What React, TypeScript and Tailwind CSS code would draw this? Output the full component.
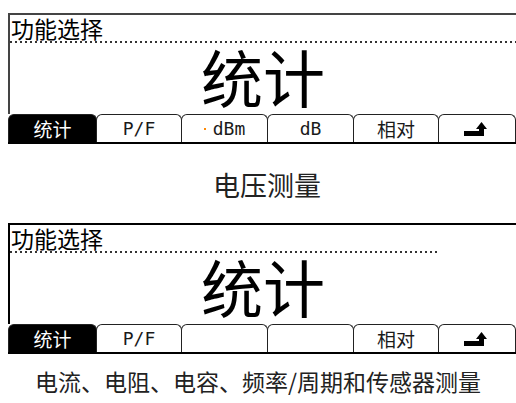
import clsx from "clsx";

type TabDef = { label?: string; w: string; kind?: "active" | "mono" | "cjk" | "dbm" | "back" };

const voltageTabs: TabDef[] = [
  { label: "统计", w: "w-[89px]", kind: "active" },
  { label: "P/F", w: "w-[86px]", kind: "mono" },
  { label: "dBm", w: "w-[87px]", kind: "dbm" },
  { label: "dB", w: "w-[87px]", kind: "mono" },
  { label: "相对", w: "w-[86px]", kind: "cjk" },
  { w: "flex-1", kind: "back" },
];

const otherTabs: TabDef[] = [
  { label: "统计", w: "w-[89px]", kind: "active" },
  { label: "P/F", w: "w-[86px]", kind: "mono" },
  { w: "w-[87px]" },
  { w: "w-[87px]" },
  { label: "相对", w: "w-[86px]", kind: "cjk" },
  { w: "flex-1", kind: "back" },
];

const BackIcon = () => (
  <svg width="28" height="16" viewBox="0 0 28 16">
    <rect x="1" y="10" width="20" height="5" fill="#000" />
    <rect x="16" y="6" width="5" height="9" fill="#000" />
    <polygon points="13,8 18.5,1 24,8" fill="#000" />
  </svg>
);

const Tab = ({ tab }: { tab: TabDef }) => {
  const active = tab.kind === "active";
  return (
    <div
      className={clsx(
        "-ml-px first:ml-0 h-[28px] flex items-center justify-center rounded-t-[6px] border-x border-t border-[#222]",
        tab.w,
        active ? "bg-black text-white" : "bg-white text-[#1a1a1a]"
      )}
    >
      {tab.kind === "back" && <BackIcon />}
      {(tab.kind === "active" || tab.kind === "cjk") && (
        <span className="text-[19px] leading-none font-['Noto_Sans_CJK_SC',sans-serif]">
          {tab.label}
        </span>
      )}
      {tab.kind === "mono" && (
        <span className="text-[18px] leading-none font-['DejaVu_Sans_Mono',monospace]">
          {tab.label}
        </span>
      )}
      {tab.kind === "dbm" && (
        <span className="flex items-center text-[18px] leading-none font-['DejaVu_Sans_Mono',monospace]">
          <span className="w-[2px] h-[2px] bg-orange-400 mr-[7px]" />
          {tab.label}
        </span>
      )}
    </div>
  );
};

const Screen = ({
  tabs,
  lineColor,
  dotWidth,
}: {
  tabs: TabDef[];
  lineColor: string;
  dotWidth: string;
}) => (
  <div className="ml-[8px]">
    <div className={clsx("border-t-2 border-l-2", lineColor)}>
      <div className="h-[26px] pl-[1px] flex items-center text-[23px] leading-none text-black font-['Noto_Sans_CJK_SC',sans-serif]">
        功能选择
      </div>
      <div
        className={clsx(
          "h-[2px] bg-[linear-gradient(to_right,#333_2px,transparent_2px)] bg-[length:5px_2px]",
          dotWidth
        )}
      />
      <div className="h-[71px] pb-[6px] flex items-center justify-center text-[62px] leading-[58px] text-black font-['Noto_Sans_CJK_SC',sans-serif]">
        统计
      </div>
    </div>
    <div className="flex items-end border-b-2 border-black">
      {tabs.map((t, i) => (
        <Tab key={i} tab={t} />
      ))}
    </div>
  </div>
);

export default function App() {
  return (
    <div className="w-[516px] h-[403px] bg-white overflow-hidden pt-[13px]">
      <Screen tabs={voltageTabs} lineColor="border-[#444]" dotWidth="w-full" />
      <div className="h-[79px] pt-[27px] pl-[18px] text-center text-[27px] leading-none text-[#222] font-['Noto_Sans_CJK_SC',serif]">
        电压测量
      </div>
      <Screen tabs={otherTabs} lineColor="border-black" dotWidth="w-[430px]" />
      <div className="pt-[16px] text-center text-[23px] leading-none text-[#222] font-['Noto_Sans_CJK_SC',serif]">
        电流、电阻、电容、频率/周期和传感器测量
      </div>
    </div>
  );
}
